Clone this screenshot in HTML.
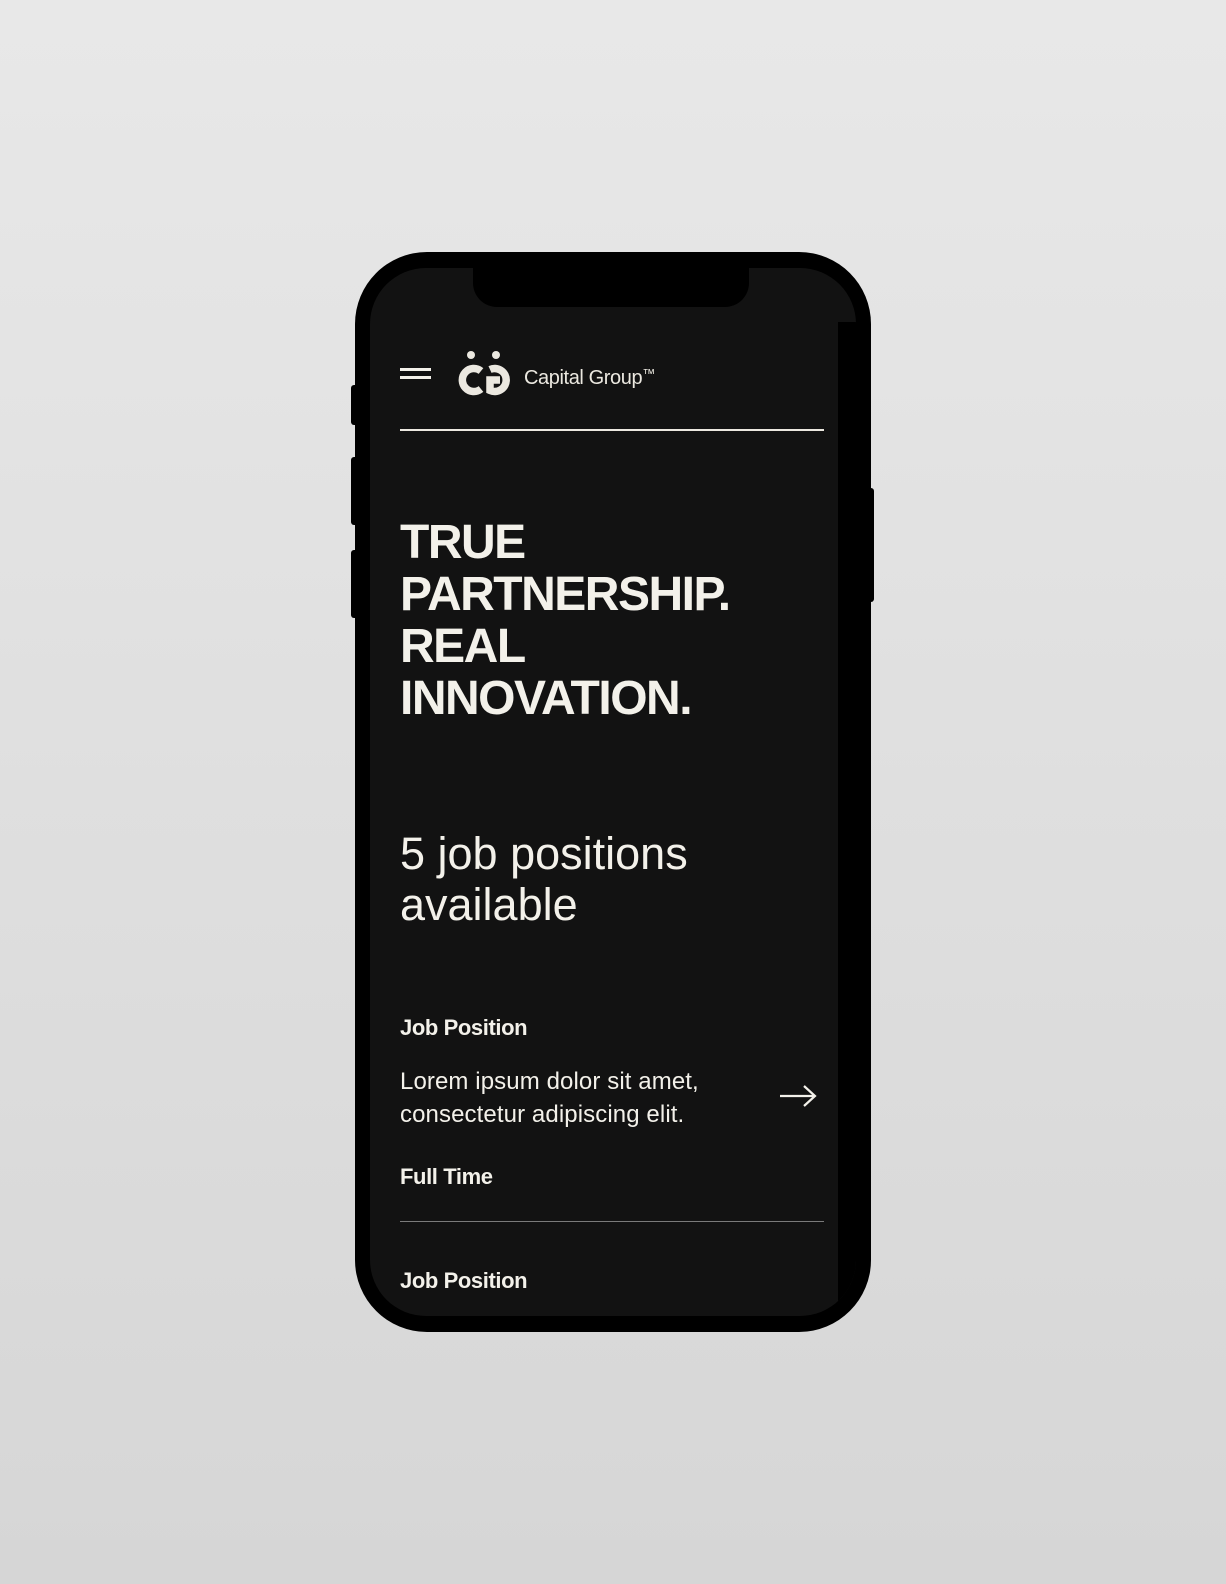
<!DOCTYPE html>
<html><head><style>
*{margin:0;padding:0;box-sizing:border-box}
body{width:1226px;height:1584px;background:linear-gradient(#e8e8e8,#d6d6d6);position:relative;overflow:hidden;font-family:"Liberation Sans",sans-serif;color:#f3f1ea}
.a{position:absolute}
.phone{left:355px;top:252px;width:516px;height:1080px;background:#000;border-radius:72px}
.screen{left:370px;top:268px;width:486px;height:1048px;background:#121212;border-radius:56px;overflow:hidden}
.btn{background:#000;border-radius:3px}
</style></head><body>
<div class="a btn" style="left:351px;top:385px;width:8px;height:40px"></div>
<div class="a btn" style="left:351px;top:457px;width:8px;height:68px"></div>
<div class="a btn" style="left:351px;top:550px;width:8px;height:68px"></div>
<div class="a btn" style="left:866px;top:488px;width:8px;height:114px"></div>
<div class="a phone"></div>
<div class="a screen">
  <div class="a" style="left:468px;top:54px;width:20px;height:1000px;background:#000"></div>
</div>
<div class="a" style="left:473px;top:262px;width:276px;height:45px;background:#000;border-radius:0 0 24px 24px"></div>
<div class="a" style="left:400px;top:368px;width:31px;height:2.5px;background:#f3f1ea"></div>
<div class="a" style="left:400px;top:376px;width:31px;height:2.5px;background:#f3f1ea"></div>
<svg class="a" style="left:456px;top:350px" width="62" height="48" viewBox="0 0 62 48">
<circle cx="15" cy="5" r="4" fill="#ebe8e0"/><circle cx="40" cy="5" r="4" fill="#ebe8e0"/>
<path d="M25 21 A11.5 11.5 0 1 0 25 39" stroke="#ebe8e0" stroke-width="7.5" fill="none"/>
<path d="M34 19.5 A11.5 11.5 0 1 1 34 40.5 L34 30 L44 30" stroke="#ebe8e0" stroke-width="7.5" fill="none"/>
</svg>
<div class="a" style="left:524px;top:366px;font-size:20px;letter-spacing:-0.4px;color:#ebe8e0">Capital Group<span style="font-size:13px;vertical-align:6px">™</span></div>
<div class="a" style="left:400px;top:429px;width:424px;height:2px;background:#ebe8e0"></div>
<div class="a" style="left:400px;top:517px;font-size:48px;font-weight:bold;line-height:52px;letter-spacing:-1.5px">TRUE<br>PARTNERSHIP.<br>REAL<br>INNOVATION.</div>
<div class="a" style="left:400px;top:828px;font-size:45px;line-height:51px;letter-spacing:0px">5 job positions<br>available</div>
<div class="a" style="left:400px;top:1015px;font-size:22px;font-weight:bold;letter-spacing:-0.4px">Job Position</div>
<div class="a" style="left:400px;top:1065px;font-size:24px;line-height:33px;letter-spacing:0.1px">Lorem ipsum dolor sit amet,<br>consectetur adipiscing elit.</div>
<svg class="a" style="left:778px;top:1084px" width="40" height="24" viewBox="0 0 40 24"><path d="M2 12H37M26 2L37 12L26 22" stroke="#f3f1ea" stroke-width="2.2" fill="none"/></svg>
<div class="a" style="left:400px;top:1164px;font-size:22px;font-weight:bold;letter-spacing:-0.4px">Full Time</div>
<div class="a" style="left:400px;top:1221px;width:424px;height:1px;background:#7a7a7a"></div>
<div class="a" style="left:400px;top:1268px;font-size:22px;font-weight:bold;letter-spacing:-0.4px">Job Position</div>
</body></html>
